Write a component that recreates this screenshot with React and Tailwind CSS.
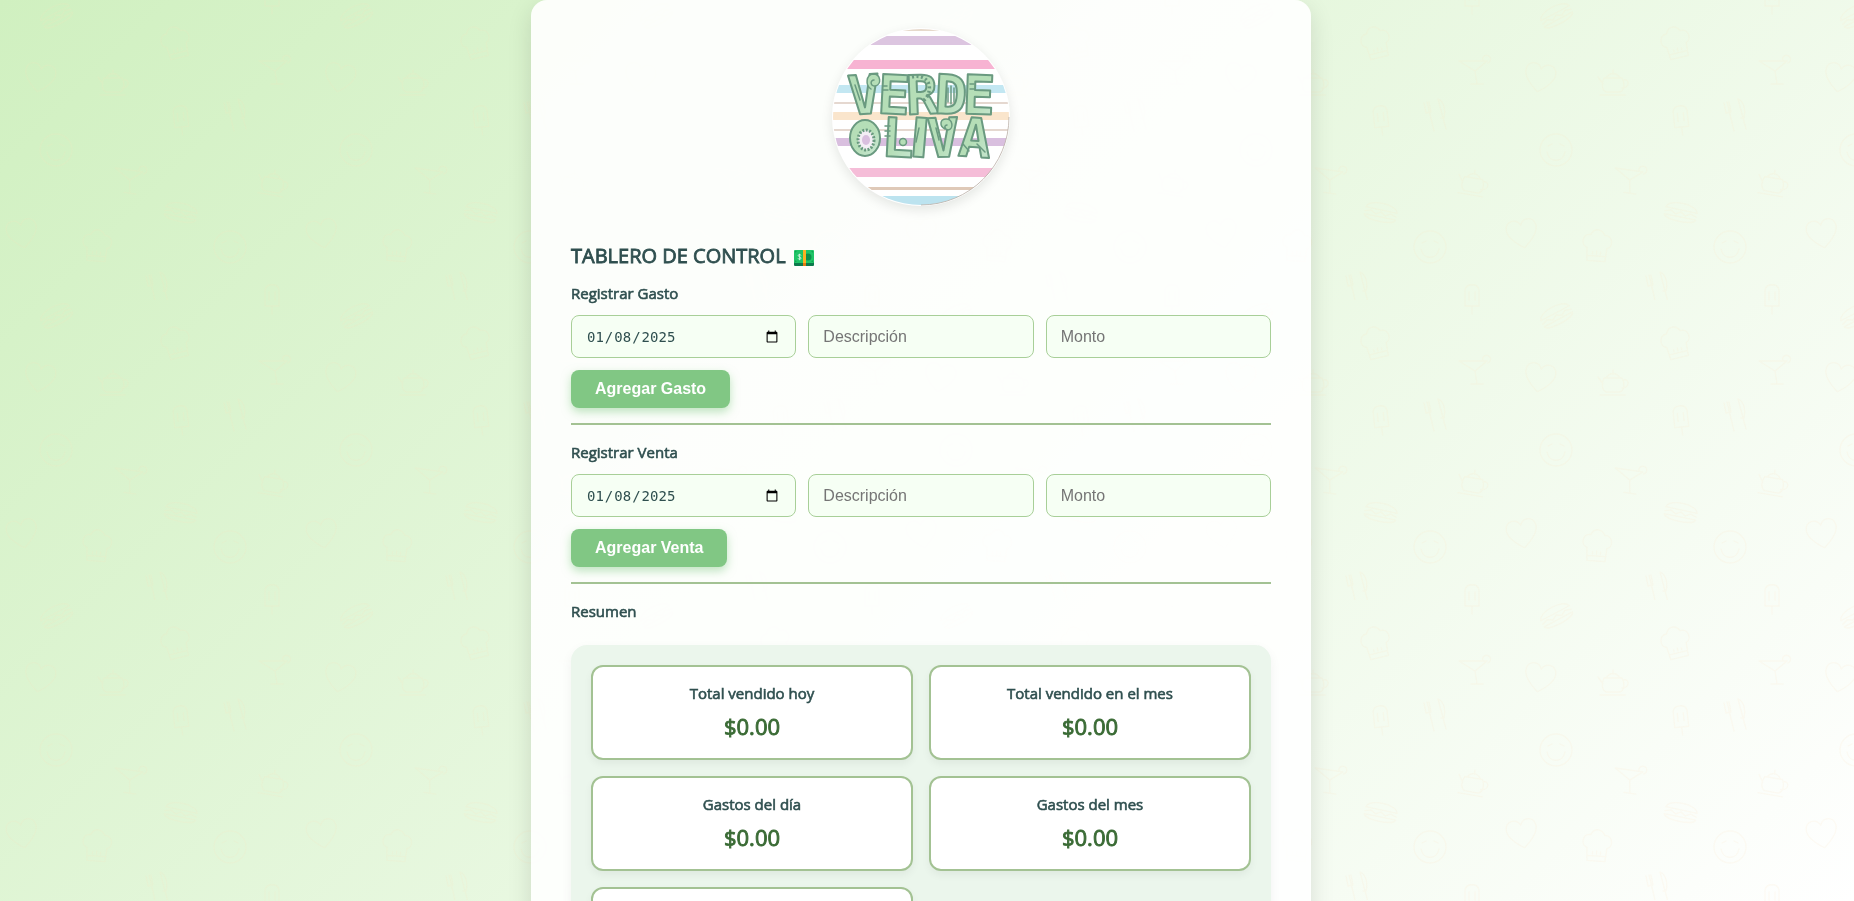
import React from "react";

const doodles = [
  ["heart", 22, 233, -10], ["hat", 97, 246, 4], ["smile", 230, 247, 0], ["cutlery", 157, 288, 0],
  ["sandwich", 181, 212, 12], ["popsicle", 272, 299, 0], ["popsicle", 272, -1, 0], ["sandwich", 56, 15, -28], ["hat", 176, 43, -14],
  ["cocktail", 274, 69, 0], ["heart", 40, 77, 10], ["teapot", 113, 82, 0], ["popsicle", 181, 120, -6],
  ["cutlery", 235, 115, 0], ["smile", 56, 150, 0], ["cocktail", 129, 178, 8], ["teapot", 273, 182, 10],
];

const shapes = {
  heart: <path d="M0 15C-8 9-16 1-15-6C-14-14-4-16 0-8C4-16 14-14 15-6C16 1 8 9 0 15Z" />,
  hat: <path d="M-9 15L-10 2C-17 0-15-12-7-11C-4-18 4-18 7-11C15-12 17 0 10 2L9 15ZM-9 10H9M-4 6V8M0 5V8M4 6V8" />,
  smile: <path d="M-16 0A16 16 0 1 0 16 0A16 16 0 1 0-16 0M-9 2C-7 13 7 13 9 2M-8-4L-4-6M4-6L8-4" />,
  cutlery: <path d="M-11-12L-9-2L-4-3L-6-13M-8-13L-1 16M3-16L11 14M3-16C9-14 11-4 9 3L6 3" />,
  sandwich: <path d="M-16-2C-14-11 14-11 16-2ZM-16 2L-10 0L-5 3L0 0L5 3L10 0L16 2M-16 5H16C15 11-15 11-16 5Z" />,
  popsicle: <path d="M-7 7V-9C-6-16 6-16 7-9V7ZM0 7V15M-3-7V1M3-7V1" />,
  cocktail: <path d="M-15-8H13L1 2ZM1 2L3 15M-3 15H9M9-8A4 4 0 1 1 14-6" />,
  teapot: <path d="M-9-4H9C13 4 10 9 7 10H-7C-11 8-12 2-9-4ZM-7-4C-3-10 3-10 7-4M0-8V-12M-10 2L-15-5M10-2C17-4 17 6 9 6M-13 13H12" />,
};

function Backdrop() {
  return (
    <div aria-hidden="true" className="pointer-events-none fixed inset-0 bg-linear-[135deg,#d0f0c0,#ffffff]">
      <svg className="h-full w-full">
        <defs>
          <pattern id="doodles" width="300" height="300" patternUnits="userSpaceOnUse">
            <g fill="none" stroke="#fbdcb4" strokeWidth="1.3" strokeLinecap="round" strokeLinejoin="round" opacity="0.13">
              {doodles.map(([kind, x, y, angle], i) => (
                <g key={i} transform={`translate(${x} ${y}) rotate(${angle})`}>{shapes[kind]}</g>
              ))}
            </g>
          </pattern>
        </defs>
        <rect width="100%" height="100%" fill="url(#doodles)" />
      </svg>
    </div>
  );
}

const stripes = [
  [0, 2, "#e6d9cb"], [7, 9, "#dcc5e0"], [31, 9, "#f7b3d2"], [56, 8, "#c3e7f2"], [73, 2, "#e5d8d0"],
  [83, 8, "#fae5cc"], [100, 2, "#e5d8d0"], [109, 8, "#d9bfdf"], [139, 9, "#f5bdd8"], [158, 3, "#dfc9b8"], [167, 13, "#bce3ef"],
];

const letters = [
  ["V", 32, 86, -4], ["E", 62, 86, 3], ["R", 90, 86, -2], ["D", 119, 86, 3], ["E", 147, 86, 2],
  ["L", 66, 129, 3], ["V", 111, 129, -2], ["A", 143, 129, 4],
];

function Logo() {
  return (
    <svg viewBox="0 0 178 178" role="img" aria-label="Verde Oliva" className="h-[178px] w-[178px] rounded-full bg-white shadow-[0_4px_12px_rgba(0,0,0,0.1)]">
      <defs>
        <clipPath id="disc"><circle cx="89" cy="89" r="88" /></clipPath>
        <linearGradient id="mint" x1="0" x2="1" y1="0" y2="1">
          <stop offset="0.5" stopColor="#b5deb7" />
          <stop offset="1" stopColor="#cbe8d6" />
        </linearGradient>
      </defs>
      <g clipPath="url(#disc)">
        <rect width="180" height="180" fill="#fff" />
        {stripes.map(([y, h, fill]) => <rect key={y} y={y + 1} width="180" height={h} fill={fill} />)}
      </g>
      <path d="M89 177A88 88 0 0 0 177 89" fill="none" stroke="#b9aea6" strokeWidth="0.8" />
      <g fill="url(#mint)" stroke="#6a9a80" strokeWidth="2" strokeLinejoin="round" textAnchor="middle" className="font-['DejaVu_Sans_Mono',monospace] text-[54px] font-bold">
        {letters.map(([c, x, y, angle], i) => (
          <text key={i} x={x} y={y} transform={`rotate(${angle} ${x} ${y - 20})`}>{c}</text>
        ))}
        <text x="88" y="129" transform="rotate(5 88 109)" className="font-['DejaVu_Sans',sans-serif]">I</text>
        <ellipse cx="33" cy="110" rx="15" ry="18" />
      </g>
      <ellipse cx="34" cy="112" rx="8" ry="10" fill="#f3eef5" stroke="#6a9a80" strokeWidth="3" strokeDasharray="2 1.500" />
      <ellipse cx="34" cy="112" rx="4" ry="5" fill="#d9bfdf" />
      <g fill="none" stroke="#6a9a80" strokeWidth="1.500" strokeLinecap="round" strokeLinejoin="round">
        <path fill="#b5deb7" d="M39 61C33 57 34 47 41 46C49 46 50 57 43 58C38 58 38 52 42 52" />
        <path fill="#b5deb7" d="M113 101C107 98 108 91 114 91C121 91 122 101 116 102C112 101 112 97 115 97" />
        <path d="M23 57L28 72M51 58H55M51 62H56M138 56H142M138 61H143M53 98H58M53 103H58M53 108H58" />
        <path d="M116 60V74M119 58V76M122 60V74M87 100L84 114M104 100L107 112M131 116L137 123M145 116L153 124" />
        <circle cx="71" cy="114" r="3.500" fill="#b5deb7" />
      </g>
      <path d="M80 49C92 46 101 54 96 67C94 71 91 73 90 74" fill="none" stroke="#6a9a80" strokeWidth="3.500" strokeDasharray="2 2.500" />
    </svg>
  );
}

function Banknote() {
  return (
    <svg viewBox="0 0 20 16" role="img" aria-label="Billete" className="h-4 w-5">
      <rect y="1" width="20" height="15" rx="1" fill="#0b7a4b" />
      <rect width="20" height="13" rx="1" fill="#1fc466" />
      <path d="M1 1H3L1 3ZM19 1V3L17 1ZM1 12V10L3 12ZM19 12H17L19 10Z" fill="#12a152" />
      <circle cx="14" cy="7" r="3.500" fill="#0d8f4b" />
      <path d="M7 5.500C6.500 4 4 4.200 4.200 5.700C4.400 7.200 7 6.600 7 8.200C7 9.700 4.300 9.700 4 8.300M5.600 3.800V10.200" fill="none" stroke="#d5f5df" strokeWidth="0.900" />
      <rect x="9" width="3" height="13" fill="#fdb022" />
      <rect x="9" y="13" width="3" height="3" fill="#e07b12" />
    </svg>
  );
}

const heading = "text-[15px] leading-6 font-normal [-webkit-text-stroke:0.04em_currentColor]";
const field =
  "h-[43px] w-full min-w-0 rounded-lg border border-[#a8cf98] bg-[#f6fff4] px-3.5 text-[#2f4f4f] placeholder:text-[#757575]";

function Entry({ kind }) {
  return (
    <section>
      <h4 className={`mb-2.5 ${heading}`}>Registrar {kind}</h4>
      <form className="grid grid-cols-1 gap-3 sm:grid-cols-3" onSubmit={(e) => e.preventDefault()}>
        <input aria-label={`Fecha de ${kind}`} type="date" defaultValue="2025-01-08" className={`${field} font-['DejaVu_Sans_Mono',monospace] text-sm`} />
        <input aria-label={`Descripción de ${kind}`} type="text" placeholder="Descripción" className={`${field} font-['Liberation_Sans',sans-serif] text-base`} />
        <input aria-label={`Monto de ${kind}`} type="number" placeholder="Monto" className={`${field} font-['Liberation_Sans',sans-serif] text-base`} />
        <button className="h-[38px] justify-self-start rounded-lg bg-[#81c784] px-6 font-['Liberation_Sans',sans-serif] text-base font-bold text-white shadow-[0_4px_10px_rgba(129,199,132,0.5)] sm:col-span-3">
          Agregar {kind}
        </button>
      </form>
      <hr className="my-[15px] border-t-2 border-[#a3c293]" />
    </section>
  );
}

const totals = ["Total vendido hoy", "Total vendido en el mes", "Gastos del día", "Gastos del mes", "Ganancia neta"];

export default function App() {
  return (
    <div className="min-h-screen pr-3 font-['Open_Sans','Noto_Sans',sans-serif] text-[#2f4f4f]">
      <Backdrop />
      <main className="relative mx-auto w-full max-w-[780px] rounded-2xl bg-white/90 px-10 pt-7 pb-8 shadow-[0_8px_24px_rgba(0,0,0,0.12)]">
        <div className="mb-[34px] flex justify-center"><Logo /></div>
        <h2 className="mb-[9px] flex items-end gap-2 text-xl leading-8 font-normal [-webkit-text-stroke:0.04em_currentColor]">
          TABLERO DE CONTROL
          <span className="pb-1.5"><Banknote /></span>
        </h2>
        <Entry kind="Gasto" />
        <Entry kind="Venta" />
        <h4 className={`mb-[22px] ${heading}`}>Resumen</h4>
        <section className="grid grid-cols-1 gap-4 rounded-2xl bg-[#ebf6ec] p-5 shadow-[0_4px_12px_rgba(0,0,0,0.05)] sm:grid-cols-2">
          {totals.map((label) => (
            <div key={label} className="h-[95px] rounded-xl border-2 border-[#a3c293] bg-white pt-3.5 text-center shadow-[0_4px_8px_rgba(0,0,0,0.05)]">
              <h4 className={`mb-1.5 ${heading}`}>{label}</h4>
              <p className="text-[22px] leading-[30px] font-normal text-[#3a6b35] [-webkit-text-stroke:0.04em_currentColor]">$0.00</p>
            </div>
          ))}
        </section>
      </main>
    </div>
  );
}
